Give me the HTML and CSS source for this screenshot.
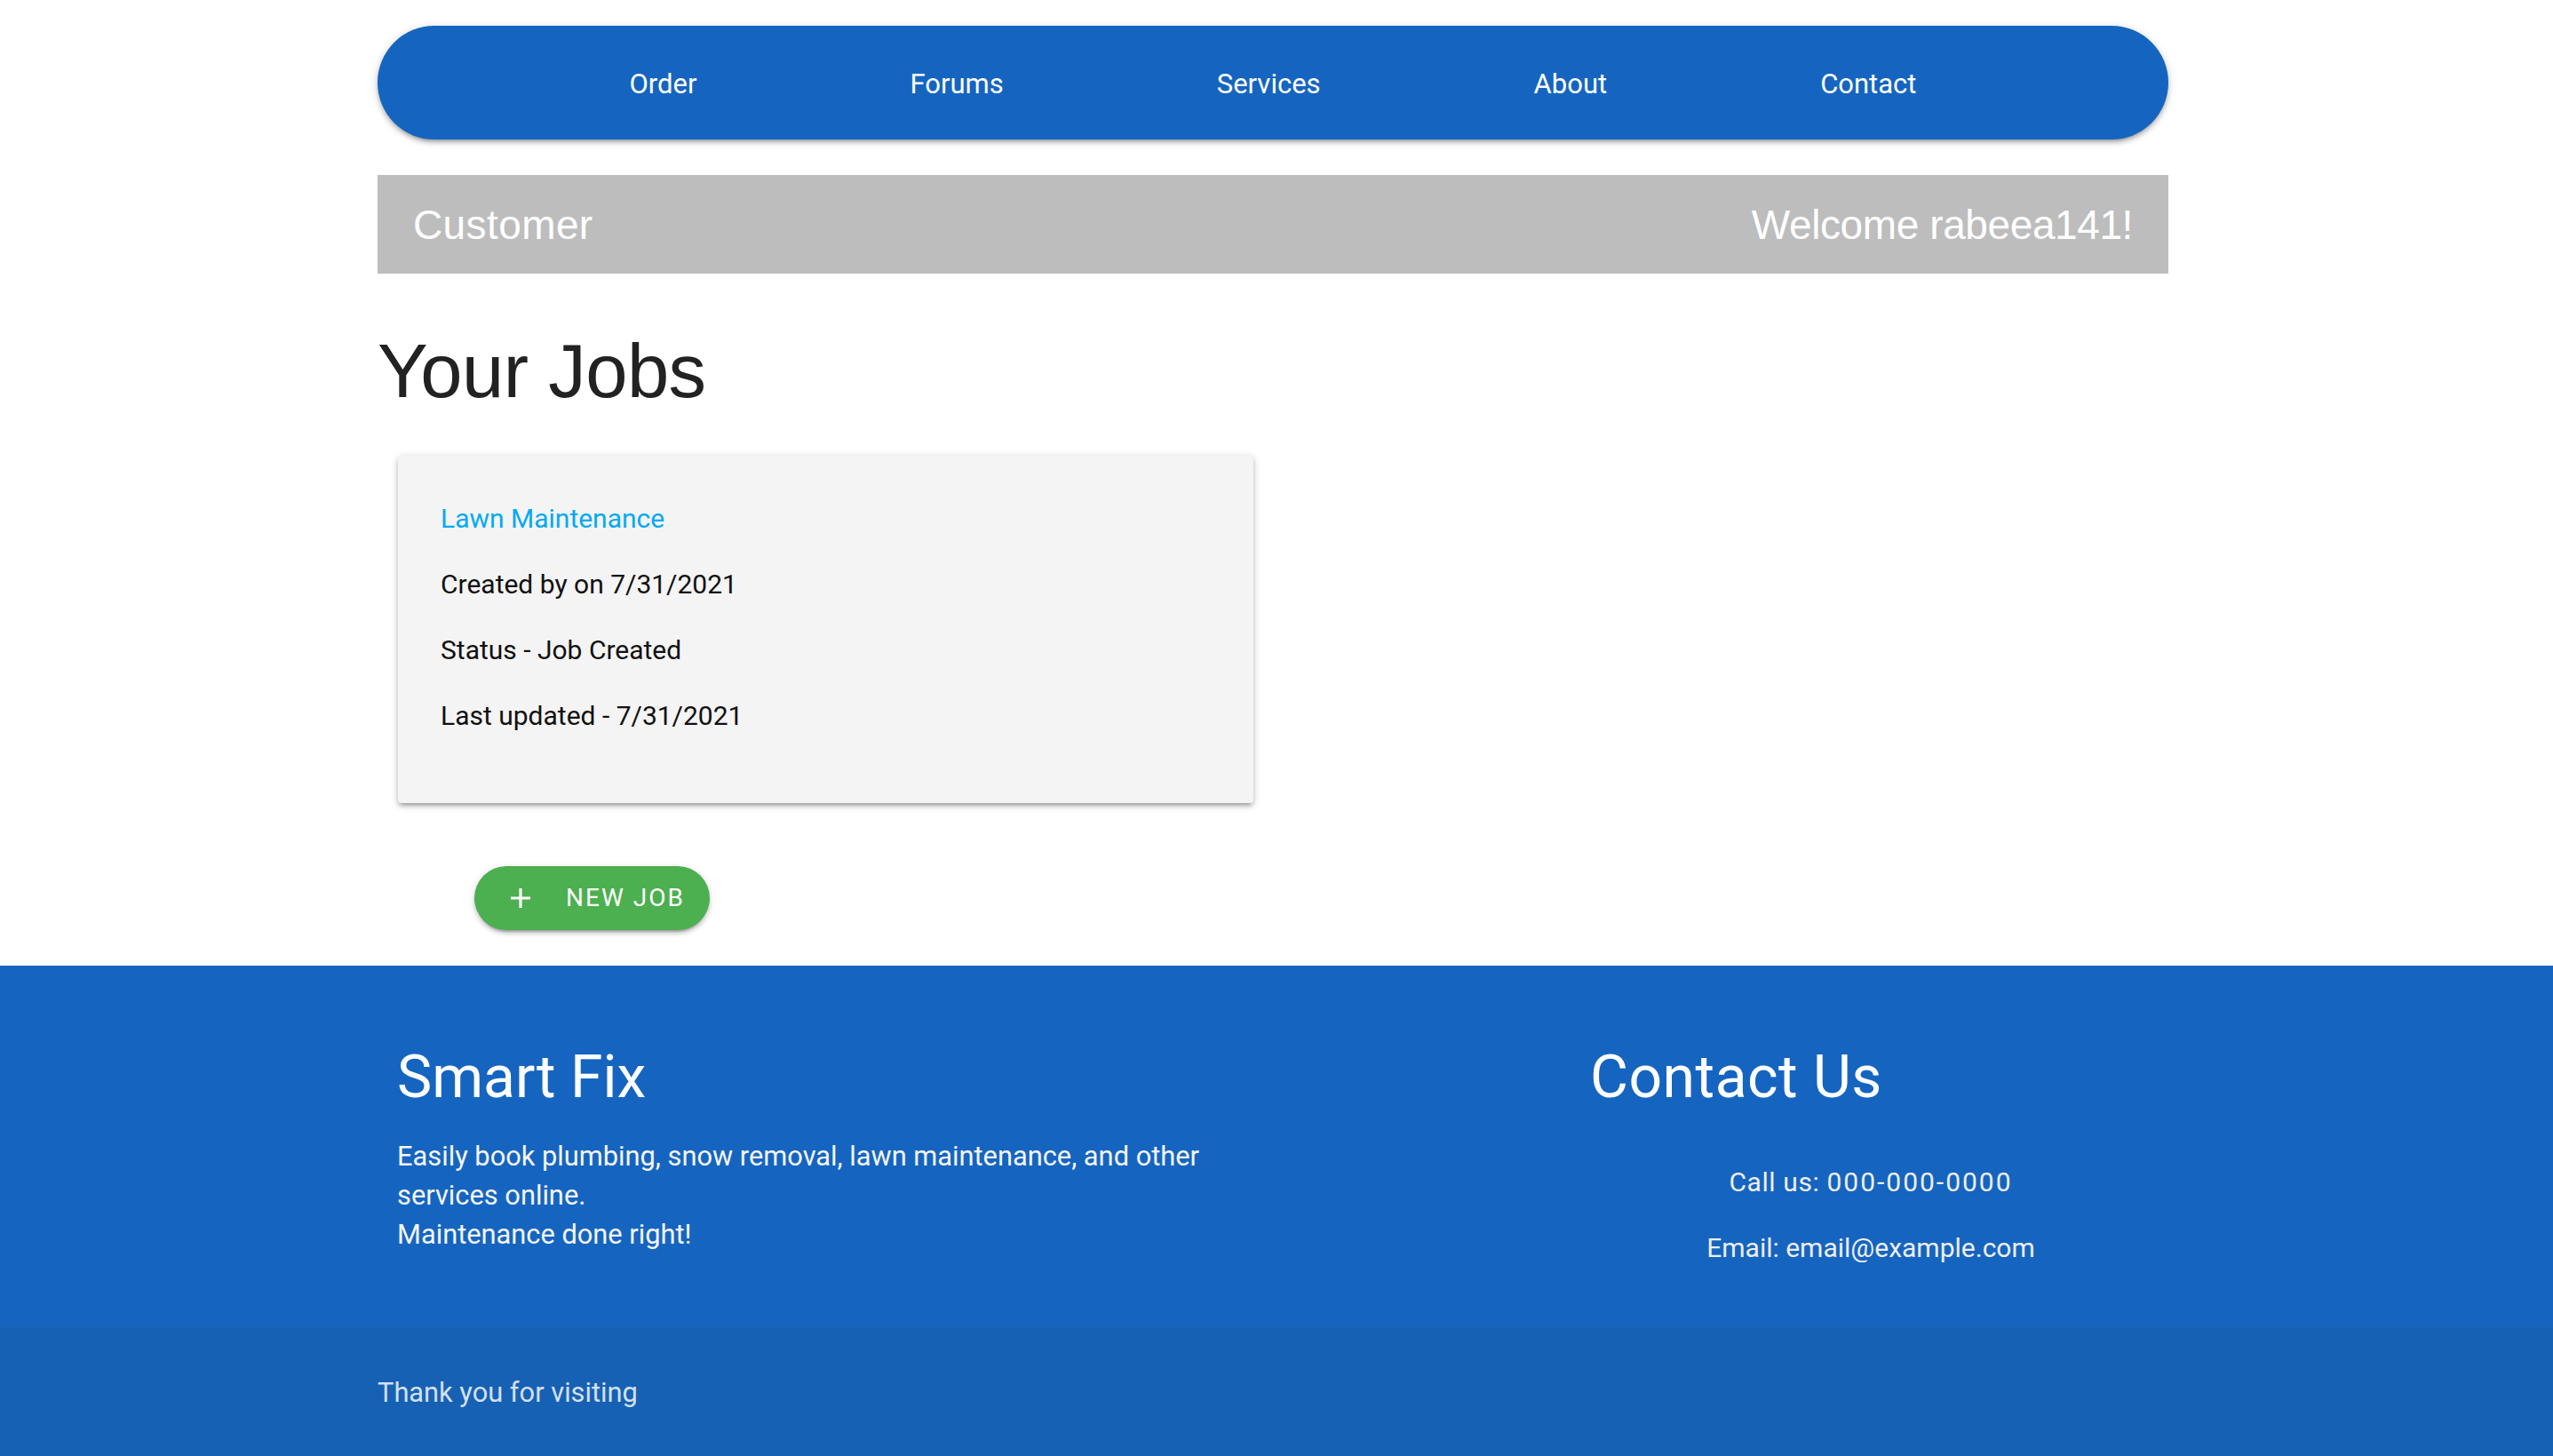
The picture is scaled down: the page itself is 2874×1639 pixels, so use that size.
FILE: index.html
```html
<!DOCTYPE html>
<html lang="en">
<head>
<meta charset="utf-8">
<title>Smart Fix - Your Jobs</title>
<link rel="stylesheet" href="styles.css">
</head>
<body>
<div class="page">
  <div class="container">
    <nav class="topnav">
      <a href="#" class="nav-link">Order</a>
      <a href="#" class="nav-link">Forums</a>
      <a href="#" class="nav-link">Services</a>
      <a href="#" class="nav-link">About</a>
      <a href="#" class="nav-link">Contact</a>
    </nav>

    <div class="role-bar">
      <span class="role-title">Customer</span>
      <span class="role-welcome">Welcome rabeea141!</span>
    </div>

    <h2 class="page-title">Your Jobs</h2>

    <div class="job-card">
      <a href="#" class="job-title">Lawn Maintenance</a>
      <p class="job-line">Created by on 7/31/2021</p>
      <p class="job-line">Status - Job Created</p>
      <p class="job-line">Last updated - 7/31/2021</p>
    </div>

    <button class="new-job-btn" type="button">
      <svg class="plus-icon" viewBox="0 0 24 24" aria-hidden="true"><path d="M19,13H13V19H11V13H5V11H11V5H13V11H19V13Z"/></svg>
      <span class="btn-label">New Job</span>
    </button>
  </div>

  <footer class="page-footer">
    <div class="container footer-row">
      <div class="footer-col">
        <h4 class="footer-heading">Smart Fix</h4>
        <p class="footer-text">Easily book plumbing, snow removal, lawn maintenance, and other services online.<br>Maintenance done right!</p>
      </div>
      <div class="footer-col">
        <h4 class="footer-heading footer-heading-wide">Contact Us</h4>
        <ul class="contact-list">
          <li class="phone-line">Call us: <span class="phone">000-000-0000</span></li>
          <li>Email: email@example.com</li>
        </ul>
      </div>
    </div>
    <div class="footer-copyright">
      <div class="container copyright-text">Thank you for visiting</div>
    </div>
  </footer>
</div>
</body>
</html>
```

FILE: styles.css
```css
* { box-sizing: border-box; }

html, body {
  margin: 0;
  padding: 0;
  background: #ffffff;
}

body {
  font-family: Roboto, "Noto Sans", "Liberation Sans", sans-serif;
  color: #111111;
}

.container {
  width: 2016px;
  margin-left: calc(50% - 1012px);
}

/* Top navigation */
.topnav {
  margin-top: 29px;
  height: 128px;
  border-radius: 64px;
  background: #1565c0;
  display: flex;
  justify-content: center;
  align-items: center;
  gap: 240px;
  padding-top: 4px;
  box-shadow: 0 4px 4px 0 rgba(0,0,0,0.14), 0 6px 2px -4px rgba(0,0,0,0.12), 0 2px 10px 0 rgba(0,0,0,0.2);
}

.nav-link {
  color: #ffffff;
  text-decoration: none;
  font-size: 31px;
  line-height: 40px;
}

/* Grey role bar */
.role-bar {
  margin-top: 40px;
  height: 111px;
  background: #bdbdbd;
  display: flex;
  justify-content: space-between;
  align-items: center;
  padding: 0 40px 0 40px;
  font-family: "Liberation Sans", Arial, sans-serif;
  font-size: 46px;
  color: #ffffff;
}

.role-title {
  letter-spacing: 0.4px;
}

.role-welcome {
  letter-spacing: -0.4px;
}

/* Heading */
.page-title {
  margin: 60px 0 0 0;
  font-family: "Liberation Sans", Arial, sans-serif;
  font-weight: 400;
  font-size: 85px;
  line-height: 100px;
  letter-spacing: -0.6px;
  color: #222222;
}

/* Job card */
.job-card {
  margin: 45px 0 0 23px;
  width: 963px;
  height: 391px;
  background: #f4f4f4;
  border-radius: 4px;
  padding: 48px 48px 0 48px;
  box-shadow: 0 4px 4px 0 rgba(0,0,0,0.14), 0 6px 2px -4px rgba(0,0,0,0.12), 0 2px 10px 0 rgba(0,0,0,0.2);
  font-size: 30px;
  line-height: 45px;
}

.job-title {
  display: block;
  color: #03a9f4;
  text-decoration: none;
}

.job-line {
  margin: 29px 0 0 0;
  color: #111111;
}

/* New job button */
.new-job-btn {
  margin: 71px 0 0 109px;
  height: 72px;
  width: 265px;
  border: none;
  border-radius: 36px;
  background: #4caf50;
  color: #ffffff;
  display: flex;
  align-items: center;
  padding: 0 0 0 33px;
  gap: 32px;
  font-family: Roboto, "Noto Sans", sans-serif;
  font-size: 28px;
  letter-spacing: 2px;
  text-transform: uppercase;
  box-shadow: 0 6px 2px -4px rgba(0,0,0,0.2), 0 4px 4px 0 rgba(0,0,0,0.14), 0 2px 10px 0 rgba(0,0,0,0.12);
  cursor: pointer;
}

.plus-icon {
  width: 38px;
  height: 38px;
  fill: #ffffff;
  flex: none;
}

.btn-label {
  line-height: 36px;
  font-weight: 400;
}

/* Footer */
.page-footer {
  margin-top: 40px;
  background: #1565c0;
  color: #ffffff;
}

.footer-row {
  display: grid;
  grid-template-columns: 985px 651px;
  column-gap: 358px;
  padding: 86px 0 0 22px;
  height: 407px;
}

.footer-heading {
  margin: 0;
  font-size: 66px;
  font-weight: 400;
  line-height: 80px;
  color: #ffffff;
}

.footer-heading-wide {
  letter-spacing: 0.5px;
}

.footer-text {
  margin: 27px 0 0 0;
  font-size: 30.8px;
  line-height: 44px;
  color: #f5f5f5;
}

.contact-list {
  list-style: none;
  margin: 55px 0 0 0;
  padding: 0 19px 0 0;
  text-align: center;
  font-size: 30px;
  line-height: 45px;
  color: #eeeeee;
}

.contact-list li + li {
  margin-top: 29px;
}

.phone-line {
  letter-spacing: 0.6px;
}

.phone {
  letter-spacing: 2px;
}

.footer-copyright {
  background: rgba(51,51,51,0.08);
  height: 145px;
  display: flex;
  align-items: center;
}

.copyright-text {
  font-size: 30.8px;
  line-height: 45px;
  color: rgba(255,255,255,0.82);
  padding-top: 2px;
}
```
